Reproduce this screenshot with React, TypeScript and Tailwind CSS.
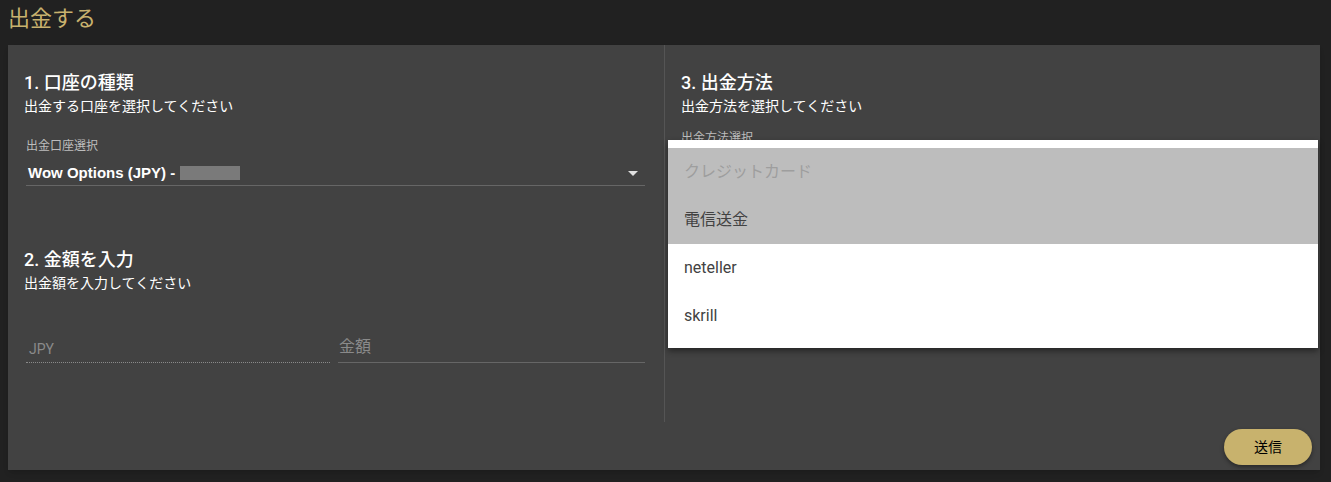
import React from 'react'

const font = { fontFamily: "Roboto, 'Noto Sans CJK JP', sans-serif" }

function Heading({ title, sub }: { title: string; sub: string }) {
  return (
    <div>
      <div className="text-[18px] leading-6 font-medium text-white">{title}</div>
      <div className="text-[14px] leading-5 mt-[1px] text-white">{sub}</div>
    </div>
  )
}

export default function App() {
  const options = [
    { label: 'クレジットカード', disabled: true, selected: true },
    { label: '電信送金', disabled: false, selected: true },
    { label: 'neteller', disabled: false, selected: false },
    { label: 'skrill', disabled: false, selected: false },
  ]

  return (
    <div className="w-[1331px] h-[482px] bg-[#212121] overflow-hidden" style={font}>
      <div className="h-[45px] pl-2 pt-[5px] text-[22px] leading-7 text-[#c9b26e]">出金する</div>
      <div className="relative ml-2 w-[1312px] h-[425px] bg-[#424242] shadow-md">
        <div className="flex h-[377px]">
          <div className="w-[656px] pl-4 pr-[19px] pt-[26px]">
            <Heading title="1. 口座の種類" sub="出金する口座を選択してください" />
            <div className="pl-[2px] mt-[22px] text-[12px] leading-4 text-[#bdbdbd]">出金口座選択</div>
            <div className="ml-[2px] mt-[9px] flex items-center h-[20px] border-b border-[#666] pb-[2px] box-content">
              <span className="pl-[2px] text-[15px] font-bold text-white" style={{ fontFamily: "'Liberation Sans', Arial, sans-serif" }}>Wow Options (JPY) -</span>
              <span className="ml-[5px] w-[60px] h-[14px] bg-[#7a7a7a]" />
              <span className="ml-auto mr-[7px] w-0 h-0 border-l-[5px] border-r-[5px] border-t-[5px] border-l-transparent border-r-transparent border-t-[#e0e0e0]" />
            </div>
            <div className="mt-[62px]">
              <Heading title="2. 金額を入力" sub="出金額を入力してください" />
            </div>
            <div className="ml-[2px] mt-[40px] flex gap-2">
              <div className="w-[304px] h-[30px] flex items-end pb-[2px] pl-[3px] text-[14px] text-[#8a8a8a] border-b border-dotted border-[#8a8a8a]">JPY</div>
              <div className="flex-1 h-[30px] flex items-end pb-[3px] pl-[1px] text-[16px] text-[#8a8a8a] border-b border-[#666]">金額</div>
            </div>
          </div>
          <div className="w-px bg-[#555]" />
          <div className="relative flex-1 pl-4 pt-[26px]">
            <Heading title="3. 出金方法" sub="出金方法を選択してください" />
            <div className="mt-[14px] text-[12px] leading-4 text-[#bdbdbd]">出金方法選択</div>
            <div className="absolute left-[3px] right-[2px] top-[95px] bg-white py-2 shadow-[0_3px_6px_rgba(0,0,0,0.45)]">
              {options.map((o) => (
                <div
                  key={o.label}
                  className={
                    'h-12 flex items-center px-4 text-[16px] ' +
                    (o.selected ? 'bg-[#bdbdbd] ' : 'bg-white ') +
                    (o.disabled ? 'text-[#9e9e9e]' : 'text-[#424242]')
                  }
                >
                  {o.label}
                </div>
              ))}
            </div>
          </div>
        </div>
        <div className="flex justify-end pr-2 pt-[7px]">
          <button className="w-[88px] h-9 rounded-full bg-[#c8b26d] text-[14px] text-black shadow-[0_2px_4px_rgba(0,0,0,0.4)]">送信</button>
        </div>
      </div>
    </div>
  )
}
